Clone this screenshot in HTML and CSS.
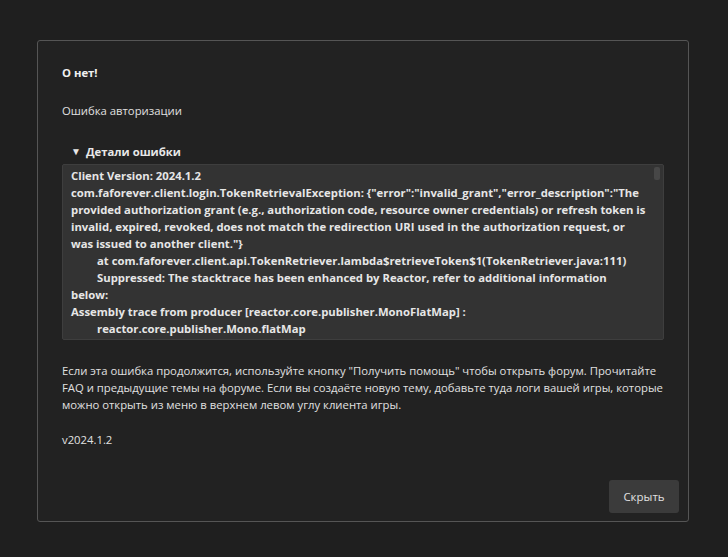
FILE: index.html
```html
<!DOCTYPE html>
<html lang="ru">
<head>
    <meta charset="UTF-8">
    <title>Ошибка</title>
    <link rel="stylesheet" href="styles.css">
</head>
<body>
    <div class="dialog">
        <div class="dialog-content">
            <div class="dialog-title">О нет!</div>
            <div class="dialog-message">Ошибка авторизации</div>

            <div class="details">
                <div class="details-toggle"><span class="arrow">▼</span>Детали ошибки</div>
                <div class="trace-box">
                    <div class="trace">Client Version: 2024.1.2
com.faforever.client.login.TokenRetrievalException: {"error":"invalid_grant","error_description":"The
provided authorization grant (e.g., authorization code, resource owner credentials) or refresh token is
invalid, expired, revoked, does not match the redirection URI used in the authorization request, or
was issued to another client."}
	at com.faforever.client.api.TokenRetriever.lambda$retrieveToken$1(TokenRetriever.java:111)
	Suppressed: The stacktrace has been enhanced by Reactor, refer to additional information
below:
Assembly trace from producer [reactor.core.publisher.MonoFlatMap] :
	reactor.core.publisher.Mono.flatMap</div>
                    <div class="scroll-thumb"></div>
                </div>
            </div>

            <p class="help-text">Если эта ошибка продолжится, используйте кнопку "Получить помощь" чтобы открыть форум. Прочитайте FAQ и предыдущие темы на форуме. Если вы создаёте новую тему, добавьте туда логи вашей игры, которые можно открыть из меню в верхнем левом углу клиента игры.</p>

            <div class="version">v2024.1.2</div>
        </div>

        <div class="dialog-footer">
            <button class="hide-button">Скрыть</button>
        </div>
    </div>
</body>
</html>
```

FILE: styles.css
```css
* {
    margin: 0;
    padding: 0;
    box-sizing: border-box;
}

body {
    font-family: "Open Sans", "Noto Sans", Arial, sans-serif;
    font-size: 11.3px;
    background-color: #1f1f1f;
    color: #e0e0e0;
    padding: 40px 0 0 37px;
}

.dialog {
    width: 652px;
    height: 482px;
    background-color: #222222;
    border: 1px solid #555555;
    border-radius: 3px;
    display: flex;
    flex-direction: column;
}

.dialog-content {
    flex: 1;
    padding: 23px 24px 0 24px;
}

.dialog-title {
    font-weight: 700;
    line-height: 17px;
    color: #f0f0f0;
}

.dialog-message {
    margin-top: 21px;
    line-height: 17px;
}

.details {
    margin-top: 24px;
}

.details-toggle {
    font-weight: 700;
    line-height: 17px;
    padding-left: 9px;
    color: #e8e8e8;
}

.arrow {
    font-size: 10px;
    margin-right: 5px;
    position: relative;
    top: -1px;
}

.trace-box {
    position: relative;
    margin-top: 3px;
    height: 176px;
    background-color: #333333;
    border: 1px solid #3e3e3e;
    border-radius: 2px;
    overflow: hidden;
}

.trace {
    white-space: pre;
    tab-size: 26px;
    font-weight: 700;
    line-height: 17px;
    padding: 2px 8px;
    color: #e6e6e6;
}

.scroll-thumb {
    position: absolute;
    top: 2px;
    right: 3px;
    width: 6px;
    height: 13px;
    border-radius: 2px;
    background-color: #474747;
}

.help-text {
    margin-top: 22px;
    line-height: 17px;
}

.version {
    margin-top: 18px;
    line-height: 17px;
}

.dialog-footer {
    display: flex;
    justify-content: flex-end;
    padding: 0 9px 8px 0;
}

.hide-button {
    font-family: inherit;
    font-size: 11.5px;
    color: #e0e0e0;
    background-color: #3b3b3b;
    border: none;
    border-radius: 3px;
    width: 70px;
    height: 33px;
}
```
